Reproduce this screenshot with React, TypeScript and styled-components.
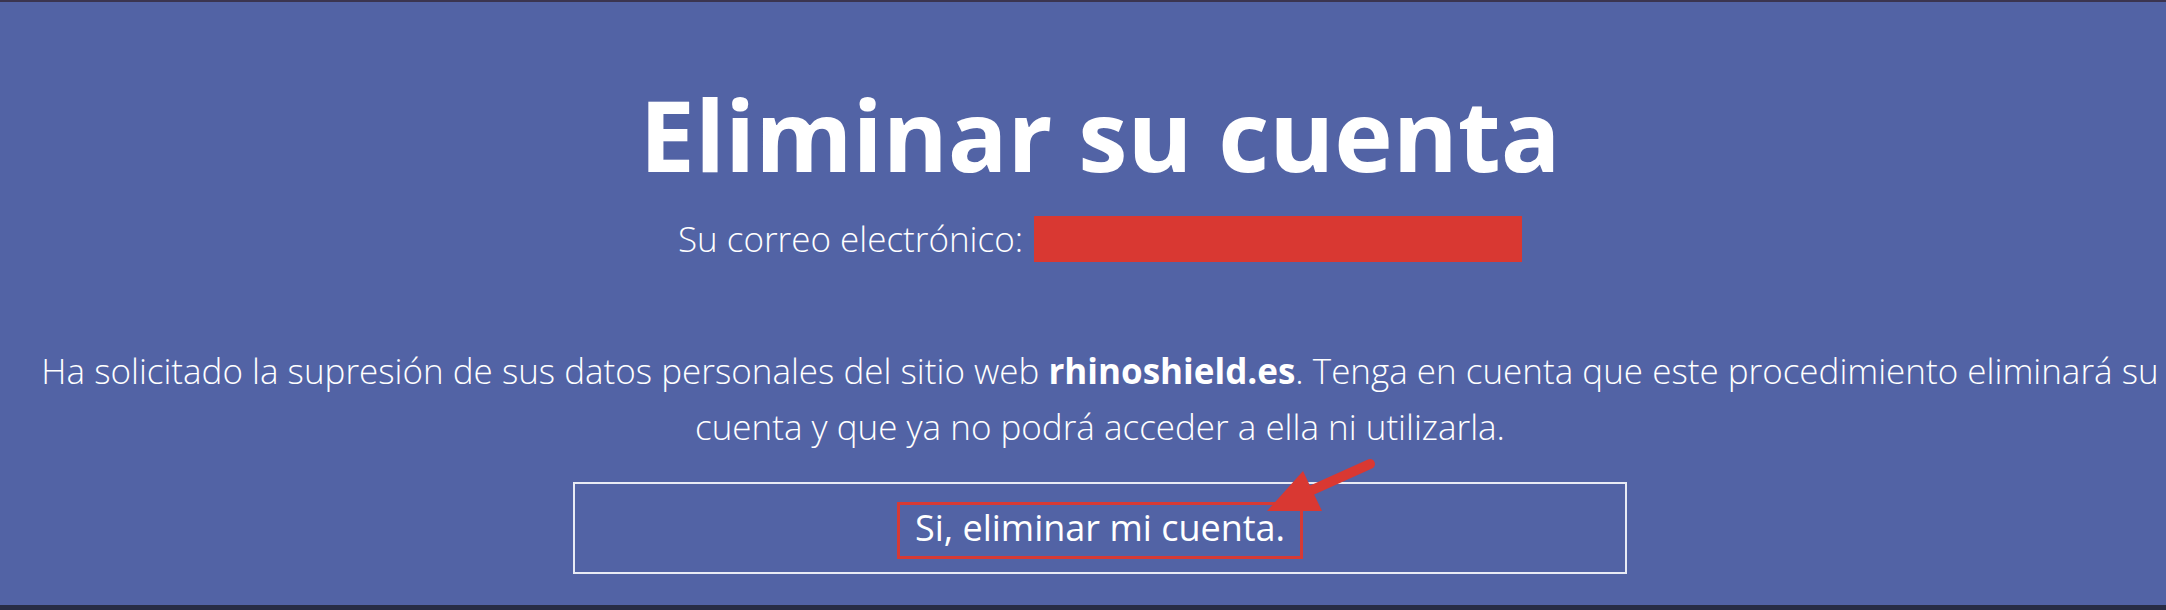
import React from "react";
import styled, { createGlobalStyle } from "styled-components";

const GlobalStyle = createGlobalStyle`
  html, body {
    margin: 0;
    padding: 0;
    background: #5263a5;
  }
  * {
    box-sizing: border-box;
  }
`;

const Page = styled.div`
  height: 610px;
  background: #5263a5;
  border-top: 2px solid #3b3550;
  border-bottom: 5px solid #282d45;
  padding: 0 0 0 34px;
  display: flex;
  flex-direction: column;
  align-items: center;
  color: #ffffff;
  font-family: "Open Sans", "Noto Sans", sans-serif;
  text-align: center;
`;

const Title = styled.h1`
  margin: 72px 0 0;
  font-size: 99px;
  font-weight: 700;
  line-height: 120px;
`;

const EmailRow = styled.div`
  margin-top: 22px;
  display: flex;
  align-items: center;
  gap: 11px;
  font-size: 35px;
  font-weight: 300;
  line-height: 46px;
`;

const Redacted = styled.span`
  display: inline-block;
  width: 488px;
  height: 46px;
  background: #d93832;
`;

const Notice = styled.p`
  margin: 81px 0 0;
  font-size: 35px;
  font-weight: 300;
  line-height: 56px;

  strong {
    font-weight: 700;
  }
`;

const ButtonWrap = styled.div`
  position: relative;
  margin-top: 27px;
`;

const ConfirmBox = styled.div`
  width: 1054px;
  height: 92px;
  border: 2px solid #e8ebf5;
  display: flex;
  align-items: center;
  justify-content: center;
`;

const Highlight = styled.span`
  margin-top: 5px;
  border: 3px solid #d63a35;
  padding: 0 15px 5px;
  font-size: 36px;
  font-weight: 400;
  line-height: 46px;
`;

const Arrow = styled.svg`
  position: absolute;
  left: 680px;
  top: -30px;
  width: 130px;
  height: 70px;
  overflow: visible;
`;

export default function App() {
  return (
    <>
      <GlobalStyle />
      <Page>
        <Title>Eliminar su cuenta</Title>
        <EmailRow>
          <span>Su correo electrónico:</span>
          <Redacted />
        </EmailRow>
        <Notice>
          Ha solicitado la supresión de sus datos personales del sitio web{" "}
          <strong>rhinoshield.es</strong>. Tenga en cuenta que este
          procedimiento eliminará su cuenta y que ya no podrá acceder a ella ni
          utilizarla.
        </Notice>
        <ButtonWrap>
          <ConfirmBox>
            <Highlight>Si, eliminar mi cuenta.</Highlight>
          </ConfirmBox>
          <Arrow viewBox="0 0 130 70">
            <line
              x1="117"
              y1="12"
              x2="57"
              y2="39"
              stroke="#d93832"
              strokeWidth="10"
              strokeLinecap="round"
            />
            <polygon points="14,59 50,19 69,59" fill="#d93832" />
          </Arrow>
        </ButtonWrap>
      </Page>
    </>
  );
}
